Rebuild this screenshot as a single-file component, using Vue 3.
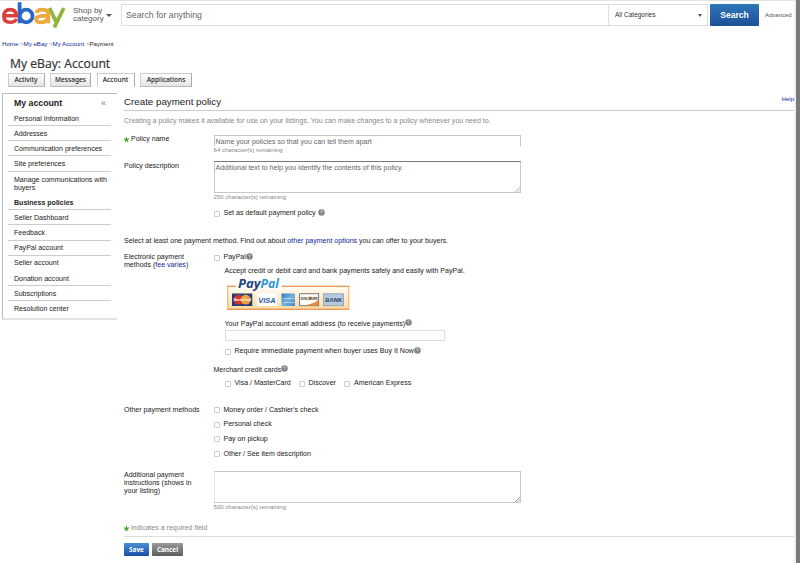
<script setup>
import { h } from 'vue'

const tabs = [
  { label: 'Activity', width: 37 },
  { label: 'Messages', width: 41 },
  { label: 'Account', width: 38, active: true },
  { label: 'Applications', width: 52 }
]

const links = [
  { label: 'Personal Information', line: true },
  { label: 'Addresses', line: true },
  { label: 'Communication preferences', line: true },
  { label: 'Site preferences', line: true },
  { label: 'Manage communications with buyers', tall: true },
  { label: 'Business policies', bold: true, line: true },
  { label: 'Seller Dashboard', line: true },
  { label: 'Feedback', line: true },
  { label: 'PayPal account', line: true },
  { label: 'Seller account' },
  { label: 'Donation account', line: true },
  { label: 'Subscriptions', line: true },
  { label: 'Resolution center' }
]

const otherMethods = ["Money order / Cashier's check", 'Personal check', 'Pay on pickup', 'Other / See item description']

const HelpIcon = () =>
  h('svg', { width: 7, height: 7, viewBox: '0 0 7 7', style: { verticalAlign: '0px', position: 'relative', top: '-0.5px' } }, [
    h('circle', { cx: 3.5, cy: 3.5, r: 3.2, fill: '#808080' }),
    h('path', { d: 'M2.4 2.7Q2.5 1.7 3.5 1.7T4.6 2.6Q4.6 3.2 3.5 3.6V4.2M3.5 4.8V5.5', fill: 'none', stroke: '#eee', 'stroke-width': 0.7 })
  ])

const Star = () =>
  h('svg', { width: 5, height: 5, viewBox: '0 0 5 5', style: { verticalAlign: '-1px' } }, [
    h('path', { d: 'M2.5 0V2.6M0 1.9L2.5 2.6L5 1.9M1 4.9L2.5 2.6L4 4.9', fill: 'none', stroke: '#3fa52a', 'stroke-width': 1.1 })
  ])
</script>

<template>
  <div class="page">
    <div class="main">
      <header class="top">
        <svg class="logo" width="66" height="28" viewBox="0 0 66 28">
          <g fill="none" stroke-width="3.8">
            <path d="M49.5 7L56.6 21.9M63.8 7L54.3 26.4" stroke="#8fb63c" />
            <path d="M36.6 12Q37.2 8.6 42.2 8.6Q48.3 8.6 48.3 13V22.2M48 14.7C41 14.7 36.2 15.2 36.2 18.3C36.2 21 39 21.4 41 21.4C45.5 21.4 48 19.2 48 14.7" stroke="#eda93b" />
            <path d="M19.6 1.2V22.2M19.8 15A6.4 6.3 0 1 0 32.6 15A6.4 6.3 0 1 0 19.8 15" stroke="#2b68c9" />
            <path d="M3.8 14.8H16.3C16.3 11 14.2 8.6 10 8.6C6 8.6 3.8 11.2 3.8 15C3.8 19 6 21.3 10 21.3C13.4 21.3 15.7 20.1 16.3 17.9" stroke="#d9423f" stroke-width="3.6" />
          </g>
        </svg>
        <div class="shop">Shop by<br />category</div>
        <i class="caret"></i>
        <div class="search">
          <span class="query">Search for anything</span>
          <span class="category">All Categories<i class="caret small"></i></span>
        </div>
        <button class="go">Search</button>
        <a class="advanced">Advanced</a>
      </header>

      <nav class="crumbs"><a>Home</a><i> &gt;</i><a>My eBay</a><i> &gt;</i><a>My Account</a><i> &gt;</i>Payment</nav>
      <h1>My eBay: Account</h1>
      <div class="tabs">
        <span v-for="t in tabs" :key="t.label" class="tab" :class="{ active: t.active }" :style="{ width: t.width + 'px' }">{{ t.label }}</span>
      </div>

      <div class="columns">
        <aside class="side">
          <div class="side-title"><b>My account</b><span>«</span></div>
          <div v-for="l in links" :key="l.label" class="link" :class="{ tall: l.tall, bold: l.bold, line: l.line }">{{ l.label }}</div>
        </aside>

        <section class="content">
          <div class="heading"><h2>Create payment policy</h2><a class="help">Help</a></div>
          <p class="intro">Creating a policy makes it available for use on your listings. You can make changes to a policy whenever you need to.</p>

          <div class="row name">
            <label><Star /> Policy name</label>
            <div>
              <div class="input">Name your policies so that you can tell them apart</div>
              <div class="remaining">64 character(s) remaining</div>
            </div>
          </div>

          <div class="row desc">
            <label>Policy description</label>
            <div>
              <div class="area dark">Additional text to help you identify the contents of this policy.
                <svg class="grip" width="5" height="5" viewBox="0 0 6 6"><path d="M0 6L6 0M3 6L6 3" stroke="#999" stroke-width=".8" /></svg>
              </div>
              <div class="remaining">250 character(s) remaining</div>
              <div class="check default"><i class="box"></i>Set as default payment policy&nbsp;<HelpIcon /></div>
            </div>
          </div>

          <p class="select">Select at least one payment method. Find out about <a>other payment options</a> you can offer to your buyers.</p>

          <div class="row electronic">
            <label>Electronic payment<br />methods (<a>fee varies</a>)</label>
            <div>
              <div class="check"><i class="box"></i>PayPal<HelpIcon /></div>
              <div class="indent accept">Accept credit or debit card and bank payments safely and easily with PayPal.</div>
              <svg class="cards" width="123" height="35" viewBox="0 -2 123 35">
                <defs>
                  <linearGradient id="cream" x1="0" y1="0" x2="0" y2="1"><stop offset="0" stop-color="#fffdf5" /><stop offset="1" stop-color="#fbdba3" /></linearGradient>
                  <linearGradient id="amex" x1="0" y1="0" x2="1" y2="1"><stop offset="0" stop-color="#2a78c0" /><stop offset=".5" stop-color="#75b3de" /><stop offset="1" stop-color="#3d88c8" /></linearGradient>
                </defs>
                <rect x=".7" y="8.4" width="121" height="22.8" fill="url(#cream)" stroke="#f3b878" stroke-width="1.2" />
                <path d="M0 8.4H9M54.5 8.4H122.3M0 31.3H122.3" stroke="#eb9a5c" stroke-width="1.3" />
                <path d="M9 7H54.5V11H9Z" fill="#fffdf8" />
                <g font-family="'Open Sans', sans-serif" font-style="italic" font-weight="700" font-size="12.3">
                  <text x="11" y="10.2" fill="#21467f" textLength="22.5" lengthAdjust="spacingAndGlyphs">Pay</text>
                  <text x="33.5" y="10.2" fill="#3197d0" textLength="18.5" lengthAdjust="spacingAndGlyphs">Pal</text>
                </g>
                <rect x="5" y="15.5" width="20.3" height="12.5" fill="#273f78" />
                <circle cx="11.5" cy="21.7" r="4.9" fill="#d8332b" /><circle cx="18.7" cy="21.7" r="4.9" fill="#eda13a" />
                <text x="6.8" y="23.1" font-size="3.2" font-weight="700" fill="#fff" textLength="17" lengthAdjust="spacingAndGlyphs">MasterCard</text>
                <rect x="30" y="15.5" width="20" height="12.5" fill="#fff" />
                <text x="31.3" y="24.6" font-size="7.8" font-weight="700" font-style="italic" fill="#25569b" textLength="17.3" lengthAdjust="spacingAndGlyphs">VISA</text>
                <rect x="54.5" y="15.5" width="13.5" height="12.5" fill="url(#amex)" />
                <text x="55.5" y="21.2" font-size="2.4" font-weight="700" fill="#e6f2fa" textLength="12" lengthAdjust="spacingAndGlyphs">AMERICAN</text>
                <text x="56.5" y="25" font-size="2.4" font-weight="700" fill="#e6f2fa" textLength="11" lengthAdjust="spacingAndGlyphs">EXPRESS</text>
                <rect x="72.7" y="15.8" width="19" height="12" fill="#fff" stroke="#444" stroke-width=".7" />
                <path d="M76 27.4Q88 26 91.3 21.5V27.4Z" fill="#eb8535" />
                <circle cx="83.2" cy="20.2" r="1.7" fill="#eb8535" />
                <text x="73.7" y="21.6" font-size="3.4" font-weight="700" fill="#333" textLength="17" lengthAdjust="spacingAndGlyphs">DISCOVER</text>
                <rect x="96.6" y="15.8" width="20" height="12" fill="#b6c9dc" stroke="#7d93ab" stroke-width=".7" />
                <text x="98.3" y="24.1" font-size="6" font-weight="700" fill="#253f6b" textLength="16.8" lengthAdjust="spacingAndGlyphs">BANK</text>
              </svg>
              <div class="indent email">Your PayPal account email address (to receive payments)<HelpIcon /></div>
              <div class="email-input"></div>
              <div class="check inner"><i class="box"></i>Require immediate payment when buyer uses Buy It Now<HelpIcon /></div>
              <div class="merchant">Merchant credit cards<HelpIcon /></div>
              <div class="trio">
                <div class="check visa"><i class="box"></i>Visa / MasterCard</div>
                <div class="check disc"><i class="box"></i>Discover</div>
                <div class="check"><i class="box"></i>American Express</div>
              </div>
            </div>
          </div>

          <div class="row other">
            <label>Other payment methods</label>
            <div><div v-for="m in otherMethods" :key="m" class="check"><i class="box"></i>{{ m }}</div></div>
          </div>

          <div class="row extra">
            <label>Additional payment<br />instructions (shows in<br />your listing)</label>
            <div>
              <div class="area faint"><svg class="grip" width="5" height="5" viewBox="0 0 6 6"><path d="M0 6L6 0M3 6L6 3" stroke="#666" stroke-width=".8" /></svg></div>
              <div class="remaining">500 character(s) remaining</div>
            </div>
          </div>

          <div class="required"><Star /> indicates a required field</div>
          <div class="actions"><button class="save">Save</button><button class="cancel">Cancel</button></div>
        </section>
      </div>
    </div>
  </div>
</template>

<style>
body { background: #fff; overflow: hidden; }
</style>

<style scoped>
* { box-sizing: border-box; }
.page { width: 800px; height: 563px; background: #fff; border-right: 4px solid #7b7b7b; font: 7.05px/8px "Liberation Sans", Arial, sans-serif; color: #222; overflow: hidden; }
.main { height: 563px; border-right: 2px solid #f0f0f0; border-top: 1px solid #e2e2e2; }
i { font-style: normal; }
a { color: #0a2896; }
p, h1, h2 { margin: 0; font-weight: 400; }
.page div, .page p, .page h1, .page h2, .page nav, .page span, .page a { white-space: nowrap; }
button { border: 0; padding: 0; font-family: inherit; color: #fff; font-weight: 700; }

.top { display: flex; height: 30px; }
.shop { margin: 6px 0 0 7px; width: 32px; font-size: 8px; line-height: 8px; color: #555; }
.caret { width: 0; height: 0; margin: 13px 0 0 1px; border: 3px solid transparent; border-top-color: #555; border-bottom: 0; }
.caret.small { margin: 0; border-width: 2.5px; border-top-width: 3px; border-bottom: 0; }
.search { display: flex; width: 587px; height: 22px; margin: 3px 0 0 9px; border: 1px solid #ddd; }
.query { width: 487px; padding-left: 4px; line-height: 21px; font-size: 8.75px; color: #666; border-right: 1px solid #ddd; }
.category { flex: 1; display: flex; align-items: center; justify-content: space-between; padding: 0 5px 0 6px; font-size: 6.5px; color: #333; }
.go { width: 49px; height: 22px; margin: 3px 0 0 2px; background: linear-gradient(#2f76b9, #1c5096); border-radius: 1px; font-size: 8.5px; }
.advanced { margin: 10px 0 0 6px; font-size: 6px; color: #555; }

.crumbs { margin: 9px 0 0 2px; height: 8px; font-size: 6.15px; letter-spacing: -.02px; }
.crumbs i { color: #888; }
h1 { margin: 7px 0 0 10px; height: 17px; font: 500 12.2px/17px "Open Sans", sans-serif; color: #333; -webkit-text-stroke: .2px #333; }
.tabs { display: flex; gap: 5.5px; margin: 1px 0 0 7.5px; height: 15px; }
.tab { height: 14px; border: 1px solid #ccc; border-right-color: #aaa; border-bottom-color: #bbb; background: linear-gradient(#fff, #e4e4e4); text-align: center; font: 500 6.6px/12px "Noto Sans", sans-serif; color: #222; }
.tab.active { background: #fff; border-bottom-color: #fff; }

.columns { display: flex; margin-top: 5px; }
.side { width: 115px; height: 227px; margin-left: 2px; border: 1px solid #bbb; border-right: 0; border-bottom: 2px solid #e4e4e4; padding: 1px 6px 0 5px; }
.side-title { display: flex; justify-content: space-between; height: 16px; padding: 0 5px 0 6px; font-size: 8.75px; line-height: 16px; }
.side-title span { font-size: 9px; color: #777; }
.link { height: 15.16px; padding: 3.6px 0 0 6px; border-bottom: 1px solid transparent; }
.link.line { border-bottom-color: #ccc; }
.page .link.tall { height: 23.5px; padding-top: 4px; white-space: normal; }
.link.bold { font-weight: 700; }

.content { flex: 1; margin-left: 7px; }
.heading { display: flex; justify-content: space-between; height: 18px; border-bottom: 1px solid #ccc; }
h2 { font-size: 9.75px; line-height: 17px; }
.help { font-size: 6px; line-height: 12px; }
.intro { margin-top: 6px; height: 8px; color: #888; }
.row { display: grid; grid-template-columns: 89.5px 1fr; }
.name { margin-top: 10px; height: 26px; }
.input { width: 307.5px; height: 11px; border: 1px solid #c8c8c8; border-bottom: 0; padding-left: 1px; line-height: 11px; color: #666; }
.remaining { font-size: 6.08px; line-height: 8px; color: #888; }
.area { position: relative; width: 307.5px; height: 32px; border: 1px solid #c8c8c8; padding: 1.5px 1px; color: #666; }
.area.dark { border-top-color: #777; }
.area.faint { border-left-color: #e4e4e4; }
.grip { position: absolute; right: 0; bottom: 0; }
.desc { height: 76px; }
.desc label { padding-top: 1px; }
.check { display: flex; align-items: center; height: 8px; }
.box { width: 6px; height: 6px; margin: 1px 4px 0 0; border: 1px solid #ccc; border-radius: 1px; }
.default { margin-top: 8px; }
.select { height: 8px; }
.electronic { margin-top: 8px; height: 152px; }
.indent { margin-left: 11px; }
.accept { margin-top: 6px; }
.cards { display: block; margin: 1px 0 0 13px; font-family: "Liberation Sans", sans-serif; }
.email { margin-top: 8px; height: 8px; }
.email-input { margin: 3px 0 0 11px; width: 220px; height: 11px; border: 1px solid #ddd; }
.inner { margin: 6px 0 0 11px; }
.merchant { margin-top: 10px; height: 8px; }
.trio { display: flex; margin: 6px 0 0 11px; }
.visa { width: 74px; }
.disc { width: 45.5px; }
.other { height: 66px; padding-top: .5px; }
.other .check { margin-bottom: 6.7px; }
.extra { height: 53px; }
.required { height: 13px; border-bottom: 1px solid #ddd; color: #888; }
.actions { display: flex; gap: 3px; margin-top: 6px; }
.actions button { height: 13px; font: 700 6.4px/13px "Noto Sans", sans-serif; border-radius: 1px; }
.save { width: 25px; background: linear-gradient(#4a92d2, #1c4ba8); }
.cancel { width: 31px; background: linear-gradient(#999, #5c5c5c); }
</style>
